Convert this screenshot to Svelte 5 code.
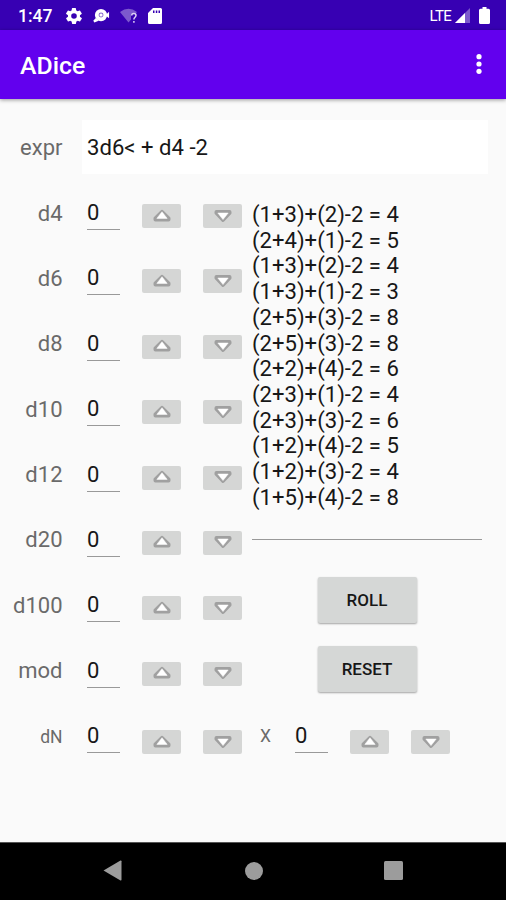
<script lang="ts">
    const LABELS = ["d4", "d6", "d8", "d10", "d12", "d20", "d100", "mod"];

    let expr = $state("3d6< + d4 -2");
    let counts = $state(LABELS.map(() => 0));
    let sides = $state(0);
    let times = $state(0);

    let results = $state([
        "(1+3)+(2)-2 = 4",
        "(2+4)+(1)-2 = 5",
        "(1+3)+(2)-2 = 4",
        "(1+3)+(1)-2 = 3",
        "(2+5)+(3)-2 = 8",
        "(2+5)+(3)-2 = 8",
        "(2+2)+(4)-2 = 6",
        "(2+3)+(1)-2 = 4",
        "(2+3)+(3)-2 = 6",
        "(1+2)+(4)-2 = 5",
        "(1+2)+(3)-2 = 4",
        "(1+5)+(4)-2 = 8",
    ]);

    const d = (n: number) => 1 + Math.floor(Math.random() * n);

    function roll() {
        // 3d6< drops the highest of the three
        const [a, b] = [d(6), d(6), d(6)].sort((x, y) => x - y);
        const c = d(4);
        results = [...results, `(${a}+${b})+(${c})-2 = ${a + b + c - 2}`].slice(-12);
    }

    function reset() {
        counts = LABELS.map(() => 0);
        sides = 0;
        times = 0;
        results = [];
    }
</script>

{#snippet stepper(value: number, step: (by: number) => void)}
    <span class="value">{value}</span>
    <button class="step up" aria-label="increase" onclick={() => step(1)}>
        <svg viewBox="0 0 20 14">
            <path class="rim" d="M10 2.8 L16.6 9.4 V10.6 H3.4 V9.4 Z" />
            <path class="face" d="M10 2.8 L15.2 9.4 H4.8 Z" />
        </svg>
    </button>
    <button class="step down" aria-label="decrease" onclick={() => step(-1)}>
        <svg viewBox="0 0 20 14">
            <path class="rim" d="M10 11 L3.4 4 V3 H16.6 V4 Z" />
            <path class="face" d="M10 10.6 L4.8 4 H15.2 Z" />
        </svg>
    </button>
{/snippet}

<div class="screen">
    <div class="status">
        <span class="clock">1:47</span>
        <svg class="gear" viewBox="2 2 20 20">
            <path
                fill-rule="evenodd"
                d="M19.4 13a7.8 7.8 0 0 0 0-2l2.1-1.6a.5.5 0 0 0 .1-.7l-2-3.4a.5.5 0 0 0-.6-.2l-2.5 1a7.3 7.3 0 0 0-1.7-1l-.4-2.6a.5.5 0 0 0-.5-.5h-4a.5.5 0 0 0-.5.5L9 5.1a7.7 7.7 0 0 0-1.7 1l-2.5-1a.5.5 0 0 0-.6.2l-2 3.4a.5.5 0 0 0 .1.7L4.5 11a7.8 7.8 0 0 0 0 2l-2.1 1.6a.5.5 0 0 0-.1.7l2 3.4c.1.2.4.3.6.2l2.5-1c.5.4 1.1.7 1.7 1l.4 2.6c0 .3.2.5.5.5h4c.3 0 .5-.2.5-.5l.4-2.6c.6-.3 1.2-.6 1.7-1l2.5 1c.2.1.5 0 .6-.2l2-3.4a.5.5 0 0 0-.1-.7ZM12 15.5a3.5 3.5 0 1 1 0-7 3.5 3.5 0 0 1 0 7Z"
            />
        </svg>
        <svg class="notice" viewBox="0 0 18 16">
            <circle cx="8.5" cy="7" r="6.5" />
            <path d="M3 10 L0.3 13 L1.5 15 L6 13 Z" />
            <path d="M14 6.5 L17 3.5 V10.5 L14 8 Z" />
            <circle class="hole" cx="8.5" cy="7" r="2.6" />
            <circle cx="8.5" cy="7" r="1.6" />
        </svg>
        <svg class="wifi" viewBox="0 0 19 16">
            <path class="dim" d="M0 4 Q8.5 -2.5 17 4 L15.5 6 H11 V11.5 L8.5 14.5 Z" />
            <path
                class="query"
                d="M11.7 7.6 C11.7 4.9 16 4.9 16 7.6 C16 9.3 13.9 9.3 13.9 11.5 M13.9 13 V14.8"
            />
        </svg>
        <svg class="sd" viewBox="0 0 14 16">
            <path
                fill-rule="evenodd"
                d="M5 0 H12.5 A1.5 1.5 0 0 1 14 1.5 V14.5 A1.5 1.5 0 0 1 12.5 16 H1.5 A1.5 1.5 0 0 1 0 14.5 V5 Z M5 2.5 V5 H6.5 V2.5 Z M7.8 2.5 V5 H9.3 V2.5 Z M10.5 2.5 V5 H12 V2.5 Z"
            />
        </svg>
        <span class="network">LTE</span>
        <svg class="signal" viewBox="0 0 15 15">
            <path class="dim" d="M0 15 L15 0 V15 Z" />
            <path d="M0 15 L10 5 V15 Z" />
        </svg>
        <svg class="battery" viewBox="0 0 11 17">
            <path d="M3.5 0 H7.5 V1.7 H9.5 Q11 1.7 11 3.2 V15.5 Q11 17 9.5 17 H1.5 Q0 17 0 15.5 V3.2 Q0 1.7 1.5 1.7 H3.5 Z" />
        </svg>
    </div>

    <header>
        <h1>ADice</h1>
        <button class="menu" aria-label="more options">
            <svg viewBox="0 0 6 22">
                <circle cx="3" cy="3.7" r="2.6" />
                <circle cx="3" cy="11" r="2.6" />
                <circle cx="3" cy="18.3" r="2.6" />
            </svg>
        </button>
    </header>

    <main>
        <label class="expr">
            <span class="name">expr</span>
            <input bind:value={expr} spellcheck="false" />
        </label>

        <div class="board">
            <div class="dice">
                {#each LABELS as label, i (label)}
                    <div class="row">
                        <span class="name">{label}</span>
                        {@render stepper(counts[i], (by) => (counts[i] += by))}
                    </div>
                {/each}
            </div>

            <div class="side">
                <div class="results">
                    {#each results as line, i (i)}
                        <div>{line}</div>
                    {/each}
                </div>
                <button class="action" onclick={roll}>ROLL</button>
                <button class="action" onclick={reset}>RESET</button>
            </div>
        </div>

        <div class="row custom">
            <span class="name">dN</span>
            {@render stepper(sides, (by) => (sides += by))}
            <span class="times">X</span>
            {@render stepper(times, (by) => (times += by))}
        </div>
    </main>

    <nav>
        <svg class="back" viewBox="0 0 19 21">
            <path d="M0.5 10.5 L17.5 0.5 Q18.5 0.3 18.5 1.2 V19.8 Q18.5 20.7 17.5 20.5 Z" />
        </svg>
        <svg class="home" viewBox="0 0 18 18"><circle cx="9" cy="9" r="9" /></svg>
        <svg class="recent" viewBox="0 0 19 19"><rect width="19" height="19" rx="1.5" /></svg>
    </nav>
</div>

<style>
    :global(body) {
        margin: 0;
    }

    .screen {
        display: flex;
        flex-direction: column;
        width: 506px;
        height: 900px;
        overflow: hidden;
        background: #fafafa;
        color: #171717;
        font-family: Roboto, "Liberation Sans", sans-serif;
    }

    svg {
        display: block;
        flex: none;
    }

    button {
        font-family: inherit;
        border: 0;
        padding: 0;
        cursor: pointer;
    }

    .status {
        display: flex;
        align-items: center;
        height: 30px;
        flex: none;
        box-sizing: border-box;
        padding: 1px 16px 0 18px;
        background: #3700b3;
        color: #fff;
        fill: #fff;
    }

    .clock {
        width: 48px;
        font-size: 17.5px;
        font-weight: 500;
    }

    .gear {
        width: 16px;
        height: 16px;
    }

    .notice {
        width: 17px;
        height: 16px;
        margin-left: 11px;
    }

    .hole {
        fill: #8a6ad0;
    }

    .wifi {
        width: 19px;
        height: 16px;
        margin-left: 10px;
    }

    .dim {
        opacity: 0.35;
    }

    .query {
        fill: none;
        stroke: #ddd0f5;
        stroke-width: 1.5;
    }

    .sd {
        width: 14px;
        height: 16px;
        margin-left: 9px;
    }

    .network {
        margin-left: auto;
        font-size: 15px;
        letter-spacing: -0.7px;
    }

    .signal {
        width: 15px;
        height: 15px;
        margin-left: 4px;
    }

    .battery {
        width: 11px;
        height: 17px;
        margin-left: 9px;
    }

    header {
        display: flex;
        align-items: center;
        justify-content: space-between;
        height: 69px;
        flex: none;
        box-sizing: border-box;
        padding: 2px 24px 0 20px;
        background: #6200ee;
        color: #fff;
        box-shadow: 0 1px 4px rgba(0, 0, 0, 0.4);
    }

    h1 {
        margin: 0;
        font-size: 24.8px;
        font-weight: 500;
    }

    .menu {
        background: none;
        fill: #fff;
    }

    .menu svg {
        width: 6px;
        height: 22px;
        margin-top: -3px;
    }

    main {
        flex: 1;
        padding-top: 21px;
    }

    .name {
        width: 62.5px;
        flex: none;
        text-align: right;
        font-size: 22px;
        color: #6a6a6a;
    }

    .expr {
        display: flex;
        align-items: center;
        height: 54px;
    }

    .expr input {
        width: 406px;
        height: 54px;
        box-sizing: border-box;
        margin-left: 19.5px;
        padding: 0 5px;
        border: 0;
        outline: none;
        background: #fff;
        color: #171717;
        font-family: inherit;
        font-size: 22.1px;
    }

    .board {
        display: flex;
        height: 523px;
        margin-top: 6px;
    }

    .row {
        display: flex;
        align-items: flex-start;
        height: 65.4px;
    }

    .row .name {
        padding-top: 20.5px;
        line-height: 26px;
    }

    .value {
        width: 33px;
        height: 31px;
        flex: none;
        margin: 18px 22px 0 24.5px;
        border-bottom: 1.5px solid #999;
        font-size: 22px;
        line-height: 30px;
    }

    .step {
        display: flex;
        align-items: center;
        justify-content: center;
        width: 39px;
        height: 24px;
        flex: none;
        margin-top: 24px;
        border-radius: 2px;
        background: #d5d6d5;
    }

    .step.down {
        margin-left: 22px;
    }

    .step svg {
        width: 20px;
        height: 14px;
        margin-top: -1px;
    }

    .rim {
        fill: #a0a0a0;
        stroke: #a0a0a0;
        stroke-width: 3.8;
        stroke-linejoin: round;
    }

    .face {
        fill: #fff;
        stroke: #fff;
        stroke-width: 0.5;
        stroke-linejoin: round;
    }

    .side {
        display: flex;
        flex-direction: column;
        align-items: center;
        width: 230px;
        margin-left: 10px;
        padding-top: 22px;
    }

    .results {
        width: 230px;
        height: 337.5px;
        flex: none;
        box-sizing: border-box;
        margin-bottom: 37px;
        border-bottom: 1.5px solid #999;
        font-size: 22.1px;
        line-height: 25.7px;
    }

    .action {
        width: 99px;
        height: 46px;
        flex: none;
        margin-bottom: 23px;
        border-radius: 2px;
        background: #d5d7d6;
        color: #171717;
        font-size: 17px;
        font-weight: 500;
        box-shadow: 0 1px 2px rgba(0, 0, 0, 0.35);
    }

    .action:last-child {
        margin-bottom: 0;
    }

    .custom .name {
        font-size: 17.5px;
    }

    .custom .step {
        margin-top: 27px;
    }

    .times {
        width: 10.5px;
        margin: 20px 0 0 18px;
        font-size: 17.5px;
        line-height: 26px;
        color: #6a6a6a;
    }

    nav {
        display: flex;
        align-items: center;
        height: 58px;
        flex: none;
        box-sizing: border-box;
        padding-bottom: 2px;
        border-top: 1px solid #555;
        background: #000;
        fill: #9c9c9c;
    }

    .back {
        width: 19px;
        height: 21px;
        margin-left: 102.5px;
    }

    .home {
        width: 18px;
        height: 18px;
        margin-left: 123px;
    }

    .recent {
        width: 19px;
        height: 19px;
        margin-left: 121.5px;
    }
</style>
